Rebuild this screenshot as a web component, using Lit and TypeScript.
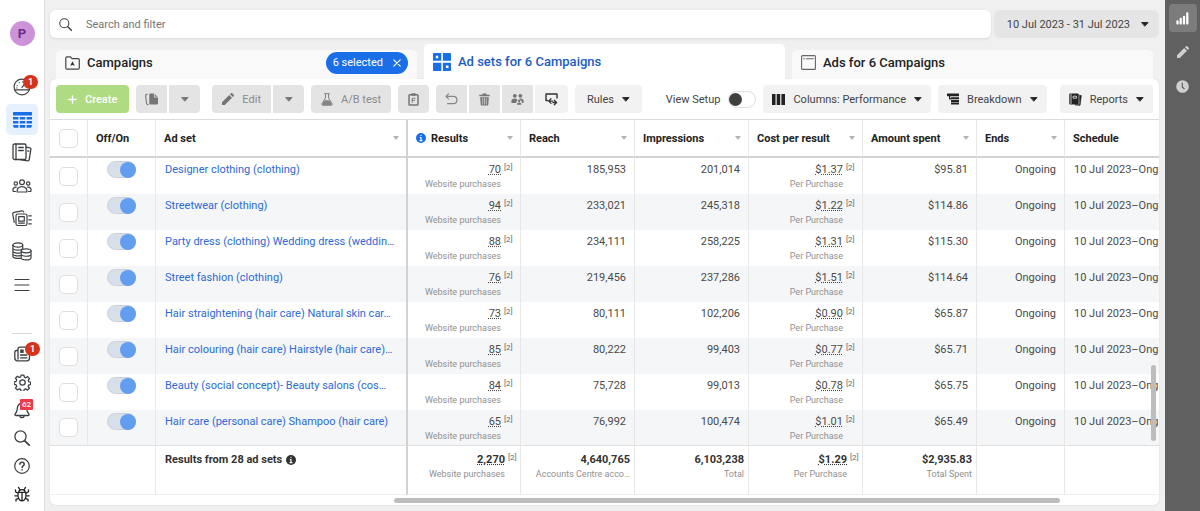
import { LitElement, html, svg, css, nothing, TemplateResult } from "lit";
import { customElement, state } from "lit/decorators.js";
import { classMap } from "lit/directives/class-map.js";

const icon = (w: number, h: number, vb: string, body: unknown) =>
  html`<svg width=${w} height=${h} viewBox=${vb} fill="none" stroke-linecap="round" stroke-linejoin="round" aria-hidden="true">${body}</svg>`;

const line = "#3c3f42";

const icons = {
  gauge: icon(18, 18, "0 0 20 20", svg`<g stroke=${line} stroke-width="1.3"><circle cx="10" cy="10" r="8.8"/><path d="M1.800 13.200h16.400M10 10.500 13.500 6"/><path d="M4.600 8.500v.1M7 5.200v.1M10.500 4.200v.1M4.300 11h.1"/></g>`),
  table: icon(19, 16, "0 0 19 16", svg`<g fill="#1a6fe8"><rect width="19" height="3.6" rx=".6"/><path d="M0 5h5.4v2.6H0zM6.8 5h5.4v2.6H6.8zM13.6 5H19v2.6h-5.4zM0 9h5.4v2.6H0zM6.8 9h5.4v2.6H6.8zM13.6 9H19v2.6h-5.4zM0 13h5.4v2.8H.8zM6.8 13h5.4v2.8H6.8zM13.6 13H19l-.8 2.8h-4.6z"/></g>`),
  book: icon(20, 19, "0 0 20 19", svg`<g stroke=${line} stroke-width="1.3"><rect x="1" y="1" width="13" height="15.5" rx="1.6"/><path d="M4 1v15.5M6.7 4.5h4.6M6.7 7.5h4.6M14 4.2l4 .7c.7.2 1 .6.9 1.2l-1.7 10.6c-.1.8-.7 1.2-1.4 1.1L8 16.7M15.8 8l1 .2"/></g>`),
  people: icon(20, 14, "0 0 20 14", svg`<g stroke=${line} stroke-width="1.2"><circle cx="10" cy="3.2" r="2.4"/><circle cx="3.8" cy="4.5" r="1.7"/><circle cx="16.2" cy="4.5" r="1.7"/><path d="M5.2 13c-.5-3.400 1.600-5.400 4.800-5.400s5.300 2 4.800 5.400zM3.500 12.500H1.300C.300 10 1.500 8 4.400 8.100M16.500 12.500h2.200c1-2.500-.2-4.500-3.100-4.400"/></g>`),
  papers: icon(20, 17, "0 0 20 17", svg`<g stroke=${line} stroke-width="1.2"><rect x="4" y="4" width="11" height="11.500" rx="1.800"/><rect x="6.700" y="6.700" width="5.600" height="4.500"/><path d="M6.700 13.200h5.600M2.300 12.500.8 4.300C.6 3.200 1 2.500 2 2.300l7.800-1.500c1-.2 1.700.3 1.900 1.200M16.800 5.800h2.500M16.800 9.800h2.500M16.800 13.800h2.500"/></g>`),
  coins: icon(20, 19, "0 0 20 19", svg`<g stroke=${line} stroke-width="1.200"><ellipse cx="5.800" cy="3" rx="4.900" ry="2.100"/><path d="M.9 3v11.300c0 1.100 2 2 4.500 2.100h3M10.700 3v3.500M.9 6c.3 2.700 9.300 2.800 9.800 0M.9 9c.3 1.800 4 2.500 7.500 1.800M.9 12c.3 1.500 4 2.200 7.500 1.600"/><ellipse cx="14.100" cy="8.800" rx="4.900" ry="2"/><path d="M9.200 8.800v7c.3 2.700 9.400 2.700 9.800 0v-7M9.200 12.300c.3 2.600 9.400 2.600 9.800 0"/></g>`),
  menu: icon(16, 14, "0 0 16 14", svg`<path d="M1 1.500h14M1 7h14M1 12.500h14" stroke=${line} stroke-width="1.200"/>`),
  news: icon(17, 16, "0 0 17 16", svg`<g stroke=${line} stroke-width="1.300"><path d="M4 13V3.200c0-1.200.7-2 2-2h7.500c1.300 0 2 .8 2 2V12c0 1.700-.8 2.800-2.400 2.800H3.500C1.700 14.800.8 13.800.8 12V6.500c0-1.300.6-2 1.700-2H4M6.500 9h6.500M6.500 11.800h6.500"/></g><rect x="6.200" y="3.500" width="3.500" height="3.400" fill=${line}/>`),
  gear: icon(17, 17, "0 0 24 24", svg`<g stroke=${line} stroke-width="1.800"><circle cx="12" cy="12" r="3.800"/><path d="M10 1.500h4l.6 3 2 .9 2.600-1.700 2.700 2.800-1.700 2.600.8 2 2.500.5v1l-.1 2.400-2.600.5-.8 2 1.700 2.500-2.800 2.700-2.500-1.700-2 .9-.6 2.600h-3.800l-.6-2.700-2-.9-2.500 1.700-2.800-2.700 1.700-2.500-.8-2.100-2.700-.5v-3.800l2.700-.6.8-2-1.700-2.500 2.700-2.700 2.600 1.700 2-.9z"/></g>`),
  bell: icon(16, 17, "0 0 16 17", svg`<g stroke=${line} stroke-width="1.300"><path d="M8 1.500c-3 0-4.500 2-4.700 5-.2 3-.8 4-2 5.300-.7.800-.3 1.700.7 1.700h12c1 0 1.400-.9.700-1.700-1.200-1.300-1.800-2.300-2-5.300-.2-3-1.700-5-4.700-5z"/><path d="M6 14.500c.4 1.600 3.600 1.600 4 0"/></g>`),
  search: icon(16, 16, "0 0 16 16", svg`<g stroke=${line} stroke-width="1.300"><circle cx="6.500" cy="6.500" r="5.600"/><path d="m10.800 10.800 4.400 4.400" stroke-width="1.700"/></g>`),
  help: icon(16, 16, "0 0 16 16", svg`<g stroke=${line} stroke-width="1.200"><circle cx="8" cy="8" r="7.300"/><path d="M5.900 6.200c.1-2.700 4.300-2.600 4.300 0 0 1.600-2.100 1.600-2.100 3.200M8.100 11.800v.2" stroke-width="1.500"/></g>`),
  bug: icon(16, 16, "0 0 16 16", svg`<g stroke="#222" stroke-width="1.300"><path d="M4.200 6.300c-.8 5 .8 8.500 3.800 8.500s4.600-3.500 3.800-8.500zM4.800 5.800C5 2.800 11 2.800 11.200 5.800M8 6.500v8M5.800 3.500 4.500 1.400M10.200 3.500l1.300-2.100M4 7.300 1.500 5.800V3.800M12 7.300l2.500-1.500v-2M4 9.800H.8M12 9.800h3.200M4.500 12.300 2 13.300v1.700M11.500 12.300l2.500 1v1.700"/></g>`),
  folder: icon(15, 14, "0 0 15 14", svg`<path d="M.8 12V2C.8 1.200 1.200.8 2 .8h3.500L7 2.600h6c.9 0 1.300.4 1.300 1.200V12c0 .8-.4 1.200-1.300 1.200H2c-.8 0-1.200-.4-1.200-1.200z" stroke="#444" stroke-width="1.200"/><path d="M7.500 5.200 9.800 9.800 7.500 9l-2.300.8z" fill="#333"/>`),
  grid: icon(18, 18, "0 0 18 18", svg`<g fill="#1a6fe8" fill-rule="evenodd"><path d="M1 0h7.300v7.800H0V1c0-.6.400-1 1-1zM2.800 2.800v2.400h2.400V2.800z"/><path d="M9.900 0H17c.6 0 1 .4 1 1v6.800H9.900zM0 9.700h8.300V18H1c-.6 0-1-.4-1-1z"/><path d="M9.900 9.700H18V17c0 .6-.4 1-1 1H9.900zm3 2.800v2.600h2.600v-2.600z"/></g>`),
  frame: icon(15, 15, "0 0 15 15", svg`<rect x=".6" y=".6" width="13.800" height="13.800" rx="1" stroke="#666" stroke-width="1.100"/><path d="M2.700 3.700h.8M5.500 3.700h6.800" stroke="#666" stroke-width="1.100"/>`),
  close: icon(8, 8, "0 0 8 8", svg`<path d="m.8.8 6.400 6.400M7.200.8.8 7.200" stroke="#fff" stroke-width="1.200"/>`),
  plus: icon(9, 9, "0 0 9 9", svg`<path d="M4.500.8v7.400M.8 4.500h7.400" stroke="#fff" stroke-width="1.300"/>`),
  copy: icon(14, 13, "0 0 14 13", svg`<path d="M5.500.5H9l4 3.700v6c0 .8-.4 1.300-1.200 1.300H5.500c-.8 0-1.200-.5-1.200-1.300V1.700c0-.8.400-1.200 1.200-1.200z" fill="#757575"/><path d="M9.300.6v3.500H13" stroke="#e5e5e5" stroke-width=".8"/><path d="M2.300 1.200C.2 1 .6 3 .9 5l.6 5c.1 1 .6 1.700 1.600 1.600" stroke="#757575" stroke-width="1.100"/>`),
  pencil: icon(12, 12, "0 0 12 12", svg`<path d="M0 12v-2.800L7.200 2l2.800 2.800L2.800 12zM8 1.200l.8-.8c.5-.5 1.100-.5 1.600 0l1.200 1.200c.5.500.5 1.100 0 1.600l-.8.800z" fill="currentColor"/>`),
  flask: icon(12, 13, "0 0 12 13", svg`<path d="M3.600.7h4.800M4.500 1v4L1 10.500c-.6 1 0 1.800 1 1.800h8c1 0 1.600-.8 1-1.800L7.500 5V1" stroke="#858585" stroke-width="1"/><path d="M3.500 7.200h5l2.200 3.600c.4.800 0 1.200-.7 1.200H2c-.7 0-1.100-.4-.7-1.200z" fill="#858585"/>`),
  clipboard: icon(11, 13, "0 0 11 13", svg`<rect x="1" y="1.800" width="9" height="10.300" rx=".8" stroke="#757575" stroke-width="1.500"/><path d="M3.500.3h4v2.500h-4z" fill="#757575"/><path d="M4.200 9.600V5.300h3M4.200 7.400h2.500" stroke="#757575" stroke-width=".9"/>`),
  undo: icon(13, 12, "0 0 13 12", svg`<path d="M3.500.8 1 3.300l2.500 2.500M1 3.300h7.300c4.800 0 4.800 7.400 0 7.400H2.500" stroke="#858585" stroke-width="1.200"/>`),
  trash: icon(11, 13, "0 0 11 13", svg`<path d="M.3 1.800h3.200V.4h4v1.400h3.200v1.500H.3z" fill="#757575"/><path d="M1.200 4.200h8.600l-.5 7.300c0 .7-.5 1.100-1.200 1.100H2.900c-.7 0-1.200-.4-1.200-1.100z" fill="#757575"/><path d="M3.700 5.500v5.700M5.500 5.500v5.700M7.300 5.500v5.700" stroke="#dedede" stroke-width=".7"/>`),
  group: icon(13, 12, "0 0 13 12", svg`<g fill="#757575"><circle cx="3.800" cy="2.800" r="1.900"/><circle cx="9.400" cy="2.800" r="1.900"/><path d="M.3 8.700c0-2.200 1.300-3.300 3.300-3.300 1.600 0 2.600.7 3 1.800-1 .7-1.400 1.600-1.400 2.800H1.300c-.7 0-1-.4-1-1.300zM7.500 6c.5-.4 1.200-.6 2-.6 2 0 3.200 1.100 3.200 3.300 0 .9-.3 1.300-1 1.300h-.6C11 8 9.500 6.500 7.500 6z"/><circle cx="8.200" cy="8" r="1.200"/><path d="M6 11.800c0-1.500.8-2.300 2.200-2.300s2.200.8 2.200 2.300z"/></g>`),
  exchange: icon(13, 13, "0 0 13 13", svg`<path d="M2.800 7.500H1V1h11v4" stroke="#333" stroke-width="1.400"/><path d="M6 5.800 3.700 8.100 6 10.400M4 8.100h3.500M9.300 7.200l2.300 2.300-2.300 2.300M8 9.500h3.400" stroke="#333" stroke-width="1.300"/>`),
  columns: icon(13, 11, "0 0 13 11", svg`<path d="M0 0h3.500v11H0zM4.700 0h3.500v11H4.700zM9.400 0H13v11H9.400z" fill="#222"/>`),
  breakdown: icon(12, 12, "0 0 12 12", svg`<path d="M0 .5h12v2.800H0zM4 4.300h8v2H4zM4 7h8v1.900H4zM4 9.600h8v2H4zM2 3h1.200v2.300H4V6.500H2z" fill="#222"/>`),
  reports: icon(13, 13, "0 0 13 13", svg`<rect x=".3" y=".5" width="9.400" height="11" rx="1" fill="#222"/><path d="M2 1.300v9.400M4.500 3.200h3v2h-3z" stroke="#f2f2f2" stroke-width=".8"/><path d="m10.600 2.300 1.800.3-1.400 9.700-5-.5h4.600z" fill="#222" stroke="#222" stroke-width=".6"/>`),
  chart: icon(13, 13, "0 0 13 13", svg`<path d="M1.500 9.500v2M4.700 7v4.500M8 5v6.500M11.300 1.500v10" stroke="#fff" stroke-width="2.300"/>`),
  clock: icon(13, 13, "0 0 13 13", svg`<circle cx="6.500" cy="6.500" r="6.300" fill="#d0d0d0"/><path d="M6.300 3v4l1.900 1.700" stroke="#606060" stroke-width="1.200"/>`),
  info: icon(10, 10, "0 0 10 10", svg`<circle cx="5" cy="5" r="5" fill="currentColor"/><path d="M5 2.300v.2M4.300 4.500H5v3M4 7.600h2" stroke="#fff" stroke-width="1.200"/>`),
  caret: icon(8, 5, "0 0 8 5", svg`<path d="M.9.500h6.200L4 4z" fill="currentColor" stroke="currentColor" stroke-width=".9"/>`),
  sort: icon(6, 4, "0 0 6 4", svg`<path d="M0 0h6L3 4z" fill="#b4b4b4"/>`),
};

interface AdSet {
  name: string;
  results: string;
  reach: string;
  impressions: string;
  cost: string;
  spent: string;
}

const adSets: AdSet[] = [
  ["Designer clothing (clothing)", "70", "185,953", "201,014", "$1.37", "$95.81"],
  ["Streetwear (clothing)", "94", "233,021", "245,318", "$1.22", "$114.86"],
  ["Party dress (clothing) Wedding dress (weddin…", "88", "234,111", "258,225", "$1.31", "$115.30"],
  ["Street fashion (clothing)", "76", "219,456", "237,286", "$1.51", "$114.64"],
  ["Hair straightening (hair care) Natural skin car…", "73", "80,111", "102,206", "$0.90", "$65.87"],
  ["Hair colouring (hair care) Hairstyle (hair care)…", "85", "80,222", "99,403", "$0.77", "$65.71"],
  ["Beauty (social concept)- Beauty salons (cos…", "84", "75,728", "99,013", "$0.78", "$65.75"],
  ["Hair care (personal care) Shampoo (hair care)", "65", "76,992", "100,474", "$1.01", "$65.49"],
].map(([name, results, reach, impressions, cost, spent]) => ({ name, results, reach, impressions, cost, spent }));

@customElement("nav-rail")
class NavRail extends LitElement {
  static styles = css`
    :host { display: flex; flex-direction: column; align-items: center; width: 45px; background: #fff; border-right: 1px solid #dcdcdc; box-sizing: border-box; padding: 21px 0 3px; font-family: Roboto, sans-serif; }
    button { position: relative; display: grid; place-items: center; border: 0; padding: 0; background: none; font: inherit; }
    .avatar { width: 25px; height: 25px; border-radius: 50%; background: #cd93d8; color: #6b2d8c; font-size: 13px; font-weight: 700; margin-bottom: 24px; }
    .item { width: 32px; height: 31px; margin: 1px 0; border-radius: 5px; }
    .current { background: #e7f0fd; }
    .small { width: 32px; height: 28px; }
    .rule { width: 20px; border: 0; border-top: 1px solid #d8d8d8; margin: auto 0 6px; }
    .badge { position: absolute; left: 17px; top: 4px; min-width: 15px; height: 14px; border-radius: 7px; background: #d6341a; color: #fff; font-size: 9px; line-height: 14px; font-weight: 700; text-align: center; }
    .small .badge { left: 19px; top: 2px; }
    .small .count { left: 14px; top: 3px; min-width: 13px; height: 11px; line-height: 11px; border-radius: 1px; background: #f03a4b; font-size: 8px; font-weight: 500; }
  `;
  render() {
    const top: [string, TemplateResult, string?][] = [
      ["Account overview", icons.gauge, "1"], ["Campaigns", icons.table], ["Ads reporting", icons.book],
      ["Audiences", icons.people], ["Advertising settings", icons.papers], ["Billing", icons.coins], ["All tools", icons.menu],
    ];
    const bottom: [string, TemplateResult, string?][] = [
      ["News", icons.news, "1"], ["Settings", icons.gear], ["Notifications", icons.bell, "62"],
      ["Search", icons.search], ["Help", icons.help], ["Report a problem", icons.bug],
    ];
    return html`
      <button class="avatar" aria-label="Account">P</button>
      ${top.map(([label, glyph, count], i) => html`
        <button class=${classMap({ item: true, current: i === 1 })} aria-label=${label}>
          ${glyph}${count ? html`<span class="badge">${count}</span>` : nothing}
        </button>`)}
      <hr class="rule" />
      ${bottom.map(([label, glyph, count]) => html`
        <button class="small" aria-label=${label}>
          ${glyph}${count ? html`<span class=${classMap({ badge: true, count: count.length > 1 })}>${count}</span>` : nothing}
        </button>`)}
    `;
  }
}

@customElement("side-tools")
class SideTools extends LitElement {
  static styles = css`
    :host { display: flex; flex-direction: column; align-items: center; gap: 6px; width: 35px; box-sizing: border-box; padding-top: 4px; background: #606060; }
    button { display: grid; place-items: center; width: 28px; height: 28px; border: 0; border-radius: 4px; padding: 0; background: none; color: #cfcfcf; }
    .on { background: #7c7c7c; }
  `;
  render() {
    return html`
      <button class="on" aria-label="Charts">${icons.chart}</button>
      <button aria-label="Edit">${icons.pencil}</button>
      <button aria-label="History">${icons.clock}</button>
    `;
  }
}

@customElement("tool-bar")
class ToolBar extends LitElement {
  static styles = css`
    :host { display: flex; align-items: center; gap: 7px; padding: 6px 6px; font-family: Roboto, sans-serif; font-size: 11px; color: #444; border-bottom: 1px solid #dcdcdc; }
    button { display: flex; align-items: center; justify-content: center; gap: 8px; height: 28px; min-width: 31px; border: 0; border-radius: 4px; padding: 0 9px; background: #f2f2f2; color: inherit; font: inherit; white-space: nowrap; }
    svg { flex: none; }
    .create { background: #afdc82; color: #fff; font-weight: 500; padding: 0 12px; }
    .off { background: #e4e4e4; color: #8a8a8a; padding: 0 10px; }
    .off svg { color: #757575; }
    .icon { padding: 0; }
    .wide { min-width: 33px; }
    .set { display: flex; gap: 2px; }
    .set + .set { margin-left: 5px; }
    .set button { border-radius: 0; }
    .set button:first-child { border-radius: 4px 0 0 4px; }
    .set button:last-child { border-radius: 0 4px 4px 0; }
    .drop { padding: 0 12px; }
    button:not(.off) svg:last-child:not(:first-child) { color: #222; }
    .drop svg { color: #222; }
    .end { display: flex; align-items: center; gap: 7px; margin-left: auto; }
    .view { display: flex; align-items: center; gap: 8px; white-space: nowrap; }
    .switch { appearance: none; display: flex; align-items: center; width: 28px; height: 17px; box-sizing: border-box; border: 1px solid #dedede; border-radius: 9px; margin: 0; background: #fff; }
    .switch::before { content: ""; width: 13px; height: 13px; border-radius: 50%; background: #404040; }
    .last { margin-left: 6px; }
  `;
  render() {
    return html`
      <button class="create">${icons.plus}Create</button>
      <div class="set">
        <button class="off icon" aria-label="Duplicate">${icons.copy}</button>
        <button class="off icon" aria-label="Duplicate options">${icons.caret}</button>
      </div>
      <div class="set">
        <button class="off">${icons.pencil}Edit</button>
        <button class="off icon" aria-label="Edit options">${icons.caret}</button>
      </div>
      <button class="off">${icons.flask}A/B test</button>
      <button class="off icon" aria-label="Copy">${icons.clipboard}</button>
      <div class="set">
        <button class="off icon" aria-label="Undo">${icons.undo}</button>
        <button class="off icon" aria-label="Delete">${icons.trash}</button>
        <button class="off icon" aria-label="Audience">${icons.group}</button>
        <button class="icon wide" aria-label="Export and import">${icons.exchange}</button>
      </div>
      <button class="drop">Rules${icons.caret}</button>
      <div class="end">
        <label class="view">View Setup<input class="switch" type="checkbox" role="switch" /></label>
        <button>${icons.columns}Columns: Performance${icons.caret}</button>
        <button>${icons.breakdown}Breakdown${icons.caret}</button>
        <button class="last">${icons.reports}Reports${icons.caret}</button>
      </div>
    `;
  }
}

@customElement("adset-table")
class AdsetTable extends LitElement {
  static styles = css`
    :host { display: block; font-family: Roboto, sans-serif; font-size: 11px; line-height: 15px; color: #4a4a4a; }
    .view { position: relative; }
    table { width: 100%; table-layout: fixed; border-collapse: separate; border-spacing: 0; }
    th, td { box-sizing: border-box; padding: 0; overflow: hidden; white-space: nowrap; border-right: 1px solid #e8e8e8; font-weight: 400; }
    th:last-child, td:last-child { border-right: 0; }
    .c-check { width: 38px; }
    .c-toggle { width: 68px; }
    .c-results { width: 113px; }
    .c-metric { width: 114px; }
    .c-ends { width: 88px; }
    .c-schedule { width: 94px; }
    thead th { height: 38px; border-bottom: 2px solid #d4d4d4; text-align: left; color: #222; font-weight: 700; vertical-align: middle; }
    .head { display: flex; align-items: center; gap: 5px; padding: 0 7px 0 8px; }
    .blue { color: #1a6fe8; display: flex; }
    .sort { margin-left: auto; border: 0; padding: 0; background: none; display: flex; }
    tbody td { height: 36px; padding-top: 4px; vertical-align: top; text-align: right; }
    tbody tr:nth-child(even) td { background: #f4f6f8; }
    tbody tr:last-child td { border-bottom: 1px solid #e0e0e0; }
    tbody .check { padding-top: 0; text-align: center; vertical-align: middle; }
    tbody .toggle { padding-top: 3px; }
    .check input { appearance: none; display: block; width: 19px; height: 19px; box-sizing: border-box; margin: 0 auto; border: 1px solid #dedede; border-radius: 5px; background: #fff; }
    .switch { appearance: none; display: flex; align-items: center; justify-content: flex-end; width: 29px; height: 17px; box-sizing: border-box; margin: 0 auto; border: 1px solid #c8d1dd; border-radius: 9px; background: #d7dfe9; }
    .switch::before { content: ""; width: 16px; height: 16px; flex: none; margin-right: -1px; border-radius: 50%; background: #629df0; }
    .name, tfoot .name { text-align: left; padding-left: 9px; }
    .name, thead th:nth-child(3) { border-right: 2px solid #d2d2d2; }
    .name a { display: block; overflow: hidden; text-overflow: ellipsis; margin-right: 8px; color: #2c6ad4; text-decoration: none; }
    .num { padding-right: 8px; }
    .pair { display: grid; grid-template-columns: 1fr 8px; column-gap: 3px; }
    .pair .sub { grid-column: 1; }
    .under { text-decoration: underline dotted; text-underline-offset: 1px; }
    sup { font-size: 8px; line-height: 12px; vertical-align: top; font-weight: 400; color: #666; }
    .sub { font-size: 9px; line-height: 15px; color: #909090; font-weight: 400; }
    .schedule { text-align: left; padding-left: 9px; }
    tfoot td { height: 49px; padding-top: 6px; vertical-align: top; text-align: right; font-weight: 700; color: #333; border-bottom: 1px solid #f0f0f0; }
    tfoot .num { padding-right: 4px; }
    .total { display: flex; align-items: center; gap: 4px; }
    .vbar { position: absolute; right: 3px; top: 245px; width: 5px; height: 76px; border-radius: 3px; background: #bdbdbd; }
    .hbar { display: flex; height: 10px; align-items: center; padding-left: 31%; }
    .thumb { width: 87%; height: 5px; border-radius: 3px; background: #bdbdbd; }
  `;

  private head(label: string, sortable = true, lead: unknown = nothing) {
    return html`<th scope="col"><div class="head">${lead}<span>${label}</span>${sortable
      ? html`<button class="sort" aria-label=${`Sort by ${label}`}>${icons.sort}</button>` : nothing}</div></th>`;
  }

  private pair(value: string, sub: string) {
    return html`<td class="num"><div class="pair"><span><span class="under">${value}</span></span><sup>[2]</sup><div class="sub">${sub}</div></div></td>`;
  }

  render() {
    return html`
      <div class="view">
        <table>
          <colgroup>
            <col class="c-check" /><col class="c-toggle" /><col /><col class="c-results" />
            <col class="c-metric" /><col class="c-metric" /><col class="c-metric" /><col class="c-metric" />
            <col class="c-ends" /><col class="c-schedule" />
          </colgroup>
          <thead>
            <tr>
              <th class="check"><input type="checkbox" aria-label="Select all ad sets" /></th>
              ${this.head("Off/On", false)}
              ${this.head("Ad set")}
              ${this.head("Results", true, html`<span class="blue">${icons.info}</span>`)}
              ${this.head("Reach")}
              ${this.head("Impressions")}
              ${this.head("Cost per result")}
              ${this.head("Amount spent")}
              ${this.head("Ends")}
              ${this.head("Schedule", false)}
            </tr>
          </thead>
          <tbody>
            ${adSets.map((row) => html`
              <tr>
                <td class="check"><input type="checkbox" aria-label=${`Select ${row.name}`} /></td>
                <td class="toggle"><input class="switch" type="checkbox" role="switch" checked aria-label=${`Turn ${row.name} on or off`} /></td>
                <td class="name"><a href="#">${row.name}</a></td>
                ${this.pair(row.results, "Website purchases")}
                <td class="num">${row.reach}</td>
                <td class="num">${row.impressions}</td>
                ${this.pair(row.cost, "Per Purchase")}
                <td class="num">${row.spent}</td>
                <td class="num">Ongoing</td>
                <td class="schedule">10 Jul 2023–Ong</td>
              </tr>`)}
          </tbody>
          <tfoot>
            <tr>
              <td colspan="2"></td>
              <td class="name"><span class="total">Results from 28 ad sets ${icons.info}</span></td>
              ${this.pair("2,270", "Website purchases")}
              <td class="num">4,640,765<div class="sub">Accounts Centre acco…</div></td>
              <td class="num">6,103,238<div class="sub">Total</div></td>
              ${this.pair("$1.29", "Per Purchase")}
              <td class="num">$2,935.83<div class="sub">Total Spent</div></td>
              <td></td>
              <td></td>
            </tr>
          </tfoot>
        </table>
        <div class="vbar"></div>
      </div>
      <div class="hbar"><div class="thumb"></div></div>
    `;
  }
}

@customElement("app-root")
class AppRoot extends LitElement {
  static styles = css`
    :host { display: flex; min-height: 100vh; background: #f0f0f0; font-family: Roboto, sans-serif; font-size: 12px; color: #222; }
    main { flex: 1; min-width: 0; padding: 10px 6px 6px 5px; }
    .top { display: flex; gap: 3px; }
    .search { flex: 1; display: flex; align-items: center; gap: 14px; height: 28px; padding: 0 9px; border-radius: 6px; background: #fff; box-shadow: 0 1px 3px #0000001a; }
    .search svg { width: 13px; height: 13px; }
    .search input { flex: 1; border: 0; outline: 0; padding: 0; background: none; font: inherit; font-size: 11px; }
    .search input::placeholder { color: #757575; opacity: 1; }
    .date { display: flex; align-items: center; gap: 11px; border: 0; border-radius: 6px; padding: 0 10px 0 13px; background: #e5e5e5; color: #444; font: inherit; font-size: 11px; }
    .date svg { color: #222; }
    .tabs { display: flex; align-items: flex-end; gap: 7px; padding: 6px 6px 0; }
    .tab { flex: 1 1 0; min-width: 0; display: flex; align-items: center; gap: 7px; height: 29px; box-sizing: border-box; border: 0; border-radius: 5px 5px 0 0; padding: 0 9px 4px; background: #f9f9f9; color: #222; font: inherit; font-size: 13px; font-weight: 500; white-space: nowrap; }
    .tab svg { flex: none; }
    .active { height: 35px; padding-bottom: 0; background: #fff; color: #1c5cc0; }
    .chip { display: flex; align-items: center; gap: 10px; height: 22px; margin-left: auto; border-radius: 11px; padding: 0 7px; background: #1a6fe8; color: #fff; font-size: 11px; font-weight: 400; }
    .panel { background: #fff; border-radius: 6px; overflow: hidden; box-shadow: 0 0 2px #0000001a; }
  `;

  @state() private tab = 1;

  render() {
    const tabs: [string, TemplateResult, unknown][] = [
      ["Campaigns", icons.folder, html`<span class="chip">6 selected ${icons.close}</span>`],
      ["Ad sets for 6 Campaigns", icons.grid, nothing],
      ["Ads for 6 Campaigns", icons.frame, nothing],
    ];
    return html`
      <nav-rail></nav-rail>
      <main>
        <div class="top">
          <label class="search">${icons.search}<input type="text" placeholder="Search and filter" aria-label="Search and filter" /></label>
          <button class="date">10 Jul 2023 - 31 Jul 2023 ${icons.caret}</button>
        </div>
        <div class="tabs" role="tablist">
          ${tabs.map(([label, glyph, extra], i) => html`
            <button role="tab" aria-selected=${i === this.tab} class=${classMap({ tab: true, active: i === this.tab })}
              @click=${() => (this.tab = i)}>${glyph}<span>${label}</span>${extra}</button>`)}
        </div>
        <div class="panel">
          <tool-bar></tool-bar>
          <adset-table></adset-table>
        </div>
      </main>
      <side-tools></side-tools>
    `;
  }
}
